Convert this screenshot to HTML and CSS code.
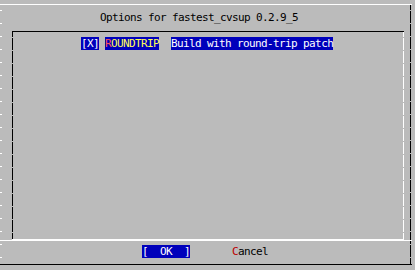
FILE: index.html
```html
<!DOCTYPE html>
<html lang="en">
<head>
    <meta charset="UTF-8">
    <meta name="viewport" content="width=device-width, initial-scale=1.0">
    <title>Options for fastest_cvsup 0.2.9_5</title>
    <link rel="stylesheet" href="styles.css">
</head>
<body>
    <div class="screen">
        <div class="dialog">
            <div class="title">Options for fastest_cvsup 0.2.9_5</div>
            <div class="list">
                <div class="item"><span class="sel">[X]</span><span class="gap1"></span><span class="sel"><span class="hot">R</span><span class="tag">OUNDTRIP</span></span><span class="gap2"></span><span class="sel">Build with round-trip patch</span></div>
            </div>
            <div class="separator"></div>
            <div class="buttons">
                <span class="btn sel">[&nbsp;&nbsp;OK&nbsp;&nbsp;]</span>
                <span class="btn cancel"><span class="key">C</span>ancel</span>
            </div>
        </div>
    </div>
</body>
</html>
```
FILE: styles.css
```css
* {
    box-sizing: border-box;
    margin: 0;
    padding: 0;
}

html, body {
    background-color: #bbbbbb;
}

body {
    font-family: "DejaVu Sans Mono", monospace;
    font-size: 11px;
    letter-spacing: -0.62px;
    line-height: 13px;
    color: #000000;
}

.screen {
    width: 415px;
    height: 270px;
    padding-top: 4px;
    overflow: hidden;
}

/* outer frame: white top, dark bottom, dashed sides */
.dialog {
    width: 412px;
    height: 261px;
    padding-top: 1px;
    border-top: 1px solid #ffffff;
    border-bottom: 1px solid #000000;
    background-origin: border-box;
    background-image:
        repeating-linear-gradient(to bottom, transparent 0 6px, #ffffff 6px 7px, transparent 7px 13px),
        repeating-linear-gradient(to bottom, #000000 0 6px, transparent 6px 7px, #000000 7px 13px);
    background-size: 2px 100%, 1px 100%;
    background-position: left top, 410px top;
    background-repeat: no-repeat;
}

.title {
    height: 13px;
    margin-top: 5px;
    padding-left: 100px;
    white-space: pre;
}

/* inner list box: dark top/left, light bottom/right */
.list {
    width: 392px;
    height: 209px;
    margin-top: 7px;
    margin-left: 12px;
    padding-top: 5px;
    border-top: 1px solid #000000;
    border-bottom: 1px solid #ffffff;
    background-origin: border-box;
    background-image:
        repeating-linear-gradient(to bottom, #000000 0 6px, transparent 6px 7px, #000000 7px 13px),
        repeating-linear-gradient(to bottom, #ffffff 0 6px, transparent 6px 7px, #ffffff 7px 13px),
        linear-gradient(#000000, #000000);
    background-size: 1px 100%, 1px 100%, 5px 1px;
    background-position: left top, right top, left bottom;
    background-repeat: no-repeat;
}

.item {
    display: flex;
    height: 13px;
    padding-left: 69px;
    white-space: pre;
}

.sel {
    display: inline-block;
    height: 13px;
    background-color: #0000bb;
    color: #ffffff;
}

.gap1 {
    width: 6px;
}

.gap2 {
    width: 12px;
}

.hot {
    color: #ff5555;
}

.tag {
    color: #ffff55;
}

.separator {
    height: 1px;
    background-color: #ffffff;
}

.buttons {
    display: flex;
    height: 13px;
    margin-top: 4px;
    padding-left: 142px;
    white-space: pre;
}

.cancel {
    margin-left: 42px;
}

.key {
    color: #bb0000;
}
```
